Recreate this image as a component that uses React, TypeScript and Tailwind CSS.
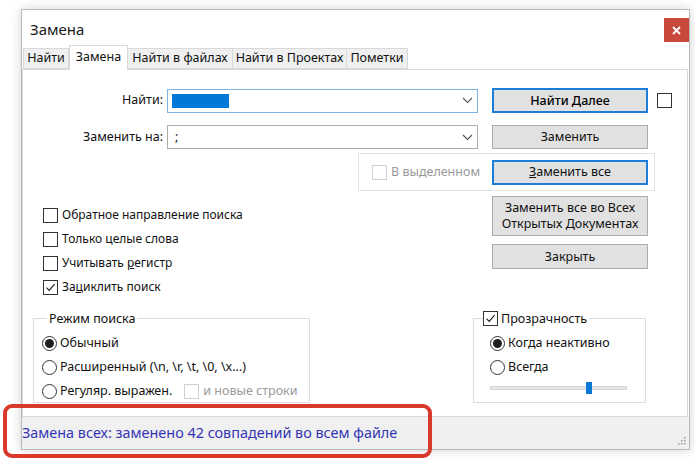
import React from "react";

const ui = "font-['Noto_Sans',sans-serif]";

function Check({ checked = false, disabled = false }: { checked?: boolean; disabled?: boolean }) {
  return (
    <span
      className={`flex h-[15px] w-[15px] shrink-0 items-center justify-center border bg-white ${
        disabled ? "border-[#d0d0d0]" : "border-[#333333]"
      }`}
    >
      {checked && (
        <svg width="11" height="11" viewBox="0 0 11 11">
          <path d="M1.5 5.6 L4.2 8.4 L9.6 2.2" fill="none" stroke="#222" strokeWidth="1.2" />
        </svg>
      )}
    </span>
  );
}

function Radio({ on = false }: { on?: boolean }) {
  return (
    <span className="flex h-[15px] w-[15px] shrink-0 items-center justify-center rounded-full border border-[#333333] bg-white">
      {on && <span className="h-[9px] w-[9px] rounded-full bg-[#1f1f1f]" />}
    </span>
  );
}

function Btn({
  children,
  focus = false,
  className = "",
}: {
  children: React.ReactNode;
  focus?: boolean;
  className?: string;
}) {
  return (
    <div
      className={`flex w-[156px] shrink-0 items-center justify-center bg-[#e1e1e1] text-center text-[12.5px] leading-[16px] text-[#111] ${
        focus ? "border-2 border-[#1a7fd6]" : "border border-[#adadad]"
      } ${className}`}
    >
      {children}
    </div>
  );
}

function Chevron() {
  return (
    <svg width="11" height="7" viewBox="0 0 11 7" className="shrink-0">
      <path d="M1 1 L5.5 5.5 L10 1" fill="none" stroke="#555" strokeWidth="1.1" />
    </svg>
  );
}

function Combo({ focus = false, children }: { focus?: boolean; children?: React.ReactNode }) {
  return (
    <div
      className={`ml-[4px] flex h-[24px] w-[311px] items-center border bg-white pl-[4px] pr-[4px] ${
        focus ? "border-[#7fb2e5]" : "border-[#adadad]"
      }`}
    >
      <div className="flex flex-1 items-center">{children}</div>
      <Chevron />
    </div>
  );
}

function CheckRow({ label, checked = false }: { label: React.ReactNode; checked?: boolean }) {
  return (
    <div className="flex h-[24px] items-center gap-[4px]">
      <Check checked={checked} />
      <span>{label}</span>
    </div>
  );
}

function RadioRow({ label, on = false, children }: { label: string; on?: boolean; children?: React.ReactNode }) {
  return (
    <div className="flex h-[24px] items-center gap-[3px]">
      <Radio on={on} />
      <span>{label}</span>
      {children}
    </div>
  );
}

export default function App() {
  const tabs = [
    { name: "Найти", w: "w-[46px]" },
    { name: "Замена", w: "w-[59px]", active: true },
    { name: "Найти в файлах", w: "w-[105px]" },
    { name: "Найти в Проектах", w: "w-[114px]" },
    { name: "Пометки", w: "w-[61px]" },
  ];

  return (
    <div className={`relative h-[460px] w-[695px] overflow-hidden bg-white ${ui} text-[12.5px] text-[#111]`}>
      <div className="pl-[21px] pt-[9px]">
        {/* dialog window */}
        <div className="flex h-[441px] w-[669px] flex-col border border-[#b9b9b9] bg-white shadow-[0_0_10px_rgba(0,0,0,0.18)]">
          {/* title bar */}
          <div className="flex h-[35px] items-start">
            <div className="flex-1 pl-[8px] pt-[9px] text-[15px] leading-[20px] text-[#1a1a1a]">Замена</div>
            <div className="mt-[8px] flex h-[24px] w-[25px] items-center justify-center bg-[#c9483d]">
              <svg width="9" height="9" viewBox="0 0 9 9">
                <path d="M1 1 L8 8 M8 1 L1 8" stroke="#fff" strokeWidth="1.8" />
              </svg>
            </div>
          </div>

          {/* tabs */}
          <div className="flex h-[24px] items-end pl-[1px]">
            {tabs.map((t) =>
              t.active ? (
                <div
                  key={t.name}
                  className={`${t.w} relative z-10 -mb-px flex h-[25px] items-center justify-center border border-b-0 border-[#d9d9d9] bg-white pb-[2px]`}
                >
                  {t.name}
                </div>
              ) : (
                <div
                  key={t.name}
                  className={`${t.w} flex h-[21px] items-center justify-center border border-l-0 border-[#d9d9d9] bg-[#f0f0f0] first:border-l`}
                >
                  {t.name}
                </div>
              )
            )}
          </div>

          {/* tab panel */}
          <div className="flex h-[348px] w-[666px] flex-col border border-[#d9d9d9] bg-white">
            {/* find row */}
            <div className="mt-[18px] flex h-[25px] items-center">
              <div className="w-[140px] text-right">Найти:</div>
              <Combo focus>
                <span className="h-[14px] w-[57px] bg-[#0078d7]" />
              </Combo>
              <Btn focus className="ml-[14px] h-[25px] font-medium text-black">
                Найти Далее
              </Btn>
              <span className="ml-[9px]">
                <Check />
              </span>
            </div>

            {/* replace row */}
            <div className="mt-[12px] flex h-[24px] items-center">
              <div className="w-[140px] text-right">Заменить на:</div>
              <Combo>
                <span className="pl-[3px]">;</span>
              </Combo>
              <Btn className="ml-[14px] h-[24px]">Заменить</Btn>
            </div>

            {/* in selection + replace all */}
            <div className="mt-[4px] flex">
              <div className="ml-[335px] flex h-[38px] w-[297px] items-center border border-[#e3e3e3] pl-[13px] pr-[6px]">
                <Check disabled />
                <span className="ml-[4px] text-[#9a9a9a]">В выделенном</span>
                <Btn focus className="ml-auto h-[25px]">
                  <span>
                    <span className="underline">З</span>аменить все
                  </span>
                </Btn>
              </div>
            </div>

            {/* options + more buttons */}
            <div className="flex">
              <div className="w-[469px] pl-[20px] pt-[12px] text-[12px]">
                <CheckRow label="Обратное направление поиска" />
                <CheckRow label="Только целые слова" />
                <CheckRow
                  label={
                    <>
                      Учитывать <span className="underline">р</span>егистр
                    </>
                  }
                />
                <CheckRow
                  checked
                  label={
                    <>
                      За<span className="underline">ц</span>иклить поиск
                    </>
                  }
                />
              </div>
              <div className="flex flex-col pt-[5px]">
                <Btn className="h-[40px]">
                  <span>
                    Заменить все во Всех
                    <br />
                    Открытых <span className="underline">Д</span>окументах
                  </span>
                </Btn>
                <Btn className="mt-[8px] h-[25px]">Закрыть</Btn>
              </div>
            </div>

            {/* groups */}
            <div className="mt-[11px] flex">
              <fieldset className="ml-[10px] h-[93px] w-[277px] border border-[#dcdcdc] pl-[8px]">
                <legend className="ml-[5px] px-[2px] leading-[17px]">Режим поиска</legend>
                <div className="pt-[4px]">
                  <RadioRow label="Обычный" on />
                  <RadioRow label="Расширенный (\n, \r, \t, \0, \x...)" />
                  <RadioRow label="Регуляр. выражен.">
                    <span className="ml-[9px] flex items-center gap-[4px] text-[#9a9a9a]">
                      <Check disabled />
                      и новые строки
                    </span>
                  </RadioRow>
                </div>
              </fieldset>

              <fieldset className="ml-[163px] h-[93px] w-[173px] border border-[#dcdcdc] pl-[16px]">
                <legend className="-ml-[7px] flex items-center gap-[3px] pr-[2px] leading-[17px]">
                  <Check checked />
                  Прозрачность
                </legend>
                <div className="pt-[4px]">
                  <RadioRow label="Когда неактивно" on />
                  <RadioRow label="Всегда" />
                  <div className="relative mt-[3px] h-[12px] w-[137px]">
                    <div className="absolute left-0 right-0 top-[4px] h-[4px] border border-[#d6d6d6] bg-[#e7e7e7]" />
                    <div className="absolute left-[96px] top-0 h-[12px] w-[6px] bg-[#0a78d4]" />
                  </div>
                </div>
              </fieldset>
            </div>
          </div>

          {/* status bar */}
          <div className="relative flex flex-1 items-center bg-[#f0f0f0]">
            <span className="text-[14.4px] text-[#3535b5]">Замена всех: заменено 42 совпадений во всем файле</span>
            <svg width="9" height="9" viewBox="0 0 9 9" className="absolute bottom-[4px] right-[3px]">
              {[
                [7, 1],
                [4, 4],
                [7, 4],
                [1, 7],
                [4, 7],
                [7, 7],
              ].map(([x, y]) => (
                <rect key={`${x}-${y}`} x={x} y={y} width="1.5" height="1.5" fill="#9a9a9a" />
              ))}
            </svg>
          </div>
        </div>
      </div>

      {/* red annotation frame */}
      <div className="pointer-events-none absolute left-[3px] top-[404px] h-[54px] w-[429px] rounded-[9px] border-4 border-[#d8392c]" />
    </div>
  );
}
